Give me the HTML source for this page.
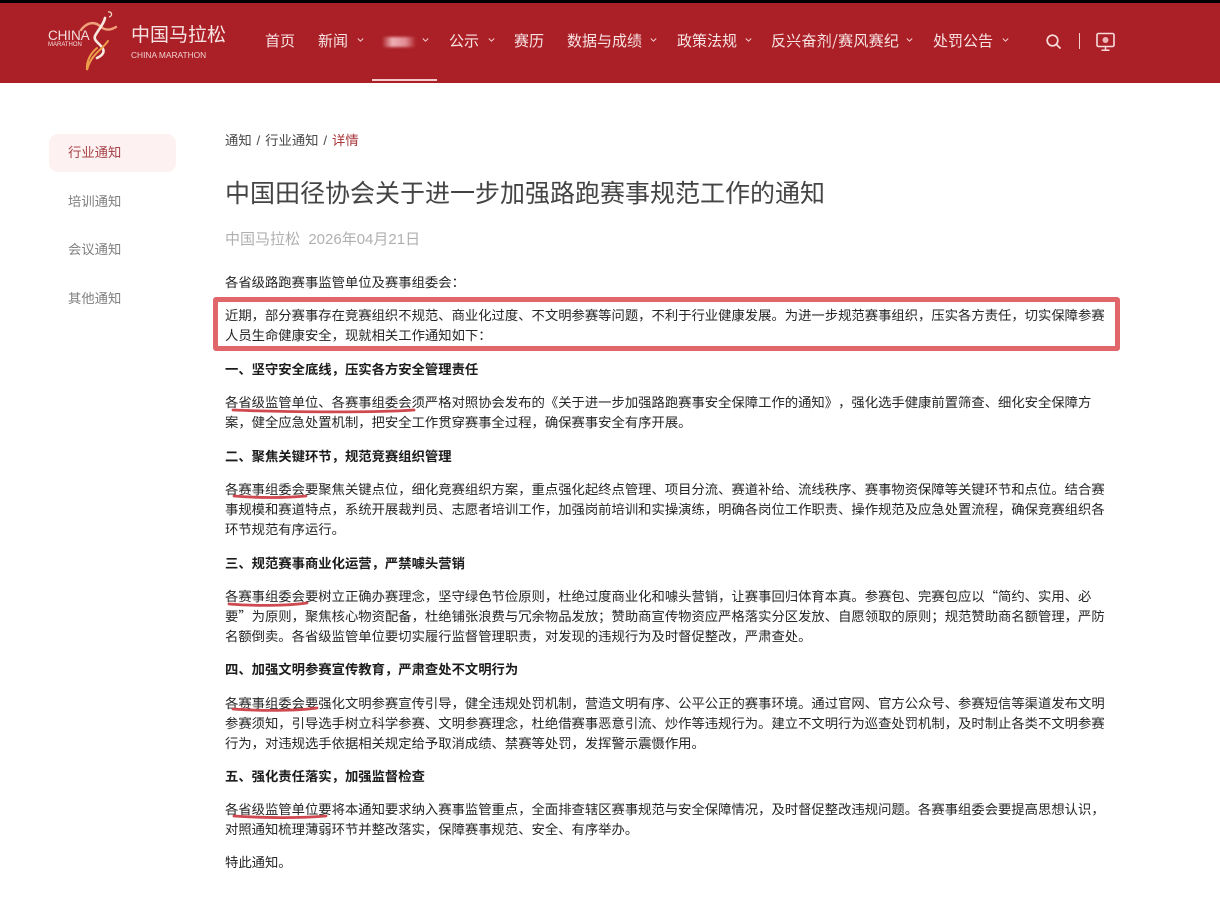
<!DOCTYPE html>
<html lang="zh-CN">
<head>
<meta charset="utf-8">
<title>中国田径协会关于进一步加强路跑赛事规范工作的通知</title>
<style>
html,body{margin:0;padding:0;width:1220px;height:900px;overflow:hidden;background:#fff;}
body{position:relative;font-family:"Liberation Sans","Noto Sans CJK SC",sans-serif;color:#333;text-spacing-trim:space-all;}
.a{position:absolute;white-space:nowrap;}
#hdr{position:absolute;left:0;top:0;width:1220px;height:83px;background:#ab2027;}
#top{position:absolute;left:0;top:0;width:1220px;height:3px;background:#000;}
.n{position:absolute;top:30px;height:21px;line-height:21px;font-size:15px;color:#f8e4e4;white-space:nowrap;filter:blur(.35px);font-family:"Noto Sans CJK SC",sans-serif;}
.c{position:absolute;top:37px;}
.l{position:absolute;left:225px;height:20px;line-height:20px;font-size:13.333px;color:#262626;white-space:nowrap;filter:blur(.3px);font-family:"Noto Sans CJK SC",sans-serif;text-spacing-trim:space-all;font-feature-settings:"palt" 0,"chws" 0;}
.b{font-weight:700;color:#1c1c1c;}
.s{position:absolute;left:68px;height:20px;line-height:20px;font-size:13.333px;color:#808080;white-space:nowrap;filter:blur(.3px);font-family:"Noto Sans CJK SC",sans-serif;}
</style>
</head>
<body>
<div id="hdr"></div>
<div id="top"></div>

<!-- logo -->
<svg class="a" style="left:78px;top:8px" width="44" height="66" viewBox="0 0 44 66" fill="none">
<path d="M30 4c4-1 5 4 1 5" stroke="#f3dcc8" stroke-width="1.300"/>
<path d="M3 22C9 14 17 13 23 19c5 4 10 3 15 0" stroke="#f0a27a" stroke-width="2.400" stroke-linecap="round"/>
<path d="M27 10c-1 6-7 12-10 18-2 5 6 8 8 13 2 4-2 7-6 9" stroke="#f7e8e0" stroke-width="2.600" stroke-linecap="round"/>
<path d="M30 33C24 42 13 46 9 62c-1-9 4-17 10-22" stroke="#eda04a" stroke-width="2" stroke-linecap="round"/>
</svg>
<div class="a" style="left:48px;top:29px;font-size:13.5px;line-height:14px;color:#f3dede;letter-spacing:-.1px">CHINA</div>
<div class="a" style="left:48px;top:42px;font-size:6px;line-height:7px;color:#f3dede">MARATHON</div>
<div class="a" style="left:131px;top:21px;font-size:19px;line-height:25px;color:#f6e3e3;font-family:'Noto Sans CJK SC',sans-serif">中国马拉松</div>
<div class="a" style="left:131px;top:50px;font-size:8.4px;line-height:10px;color:#f0d0d0">CHINA MARATHON</div>

<!-- nav -->
<div class="n" style="left:265px">首页</div>
<div class="n" style="left:318px">新闻</div>
<div class="a" style="left:382px;top:37px;width:34px;height:10px;background:linear-gradient(90deg,#ab2027,#eeb0b4 30%,#e08a90 70%,#ab2027);filter:blur(1.2px)"></div>
<div class="n" style="left:449px">公示</div>
<div class="n" style="left:514px">赛历</div>
<div class="n" style="left:567px">数据与成绩</div>
<div class="n" style="left:677px">政策法规</div>
<div class="n" style="left:771px;letter-spacing:.25px">反兴奋剂/赛风赛纪</div>
<div class="n" style="left:933px">处罚公告</div>

<svg class="c" style="left:357px" width="7" height="6" viewBox="0 0 7 6"><path d="M.8 1.500 3.500 4.200 6.200 1.500" stroke="#f3d3d3" fill="none"/></svg>
<svg class="c" style="left:422px" width="7" height="6" viewBox="0 0 7 6"><path d="M.8 1.500 3.500 4.200 6.200 1.500" stroke="#f3d3d3" fill="none"/></svg>
<svg class="c" style="left:488px" width="7" height="6" viewBox="0 0 7 6"><path d="M.8 1.500 3.500 4.200 6.200 1.500" stroke="#f3d3d3" fill="none"/></svg>
<svg class="c" style="left:650px" width="7" height="6" viewBox="0 0 7 6"><path d="M.8 1.500 3.500 4.200 6.200 1.500" stroke="#f3d3d3" fill="none"/></svg>
<svg class="c" style="left:745px" width="7" height="6" viewBox="0 0 7 6"><path d="M.8 1.500 3.500 4.200 6.200 1.500" stroke="#f3d3d3" fill="none"/></svg>
<svg class="c" style="left:906px" width="7" height="6" viewBox="0 0 7 6"><path d="M.8 1.500 3.500 4.200 6.200 1.500" stroke="#f3d3d3" fill="none"/></svg>
<svg class="c" style="left:1002px" width="7" height="6" viewBox="0 0 7 6"><path d="M.8 1.500 3.500 4.200 6.200 1.500" stroke="#f3d3d3" fill="none"/></svg>

<div class="a" style="left:372px;top:79px;width:65px;height:2px;background:#f3c9c9"></div>

<svg class="a" style="left:1045px;top:33px" width="17" height="17" viewBox="0 0 17 17" fill="none"><circle cx="7.500" cy="7.500" r="5.300" stroke="#f8dcdc" stroke-width="1.700"/><path d="M11.500 11.500 15.500 15.500" stroke="#f8dcdc" stroke-width="1.700"/></svg>
<div class="a" style="left:1079px;top:33px;width:1px;height:16px;background:#f3d0d0"></div>
<svg class="a" style="left:1095px;top:32px" width="21" height="20" viewBox="0 0 21 20" fill="none"><rect x="2" y="1.500" width="17" height="13" rx="1.500" stroke="#f8dcdc" stroke-width="1.600"/><circle cx="10.500" cy="8" r="3" fill="#eeb7b7"/><path d="M10.500 15v3M6.500 18.200h8" stroke="#f8dcdc" stroke-width="1.500"/></svg>

<!-- sidebar -->
<div class="a" style="left:49px;top:134px;width:127px;height:38px;background:#fdf1f1;border-radius:9px"></div>
<div class="s" style="top:142px;color:#a8454a">行业通知</div>
<div class="s" style="top:191px">培训通知</div>
<div class="s" style="top:239px">会议通知</div>
<div class="s" style="top:288px">其他通知</div>

<!-- head -->
<div class="a" style="left:225px;top:131px;font-size:13.333px;word-spacing:1.200px;line-height:20px;color:#4a4a4a;filter:blur(.25px)">通知 / 行业通知 / <span style="color:#a8353a">详情</span></div>
<div class="a" style="left:225px;top:175px;font-size:25px;line-height:34px;color:#444;filter:blur(.25px);font-family:'Noto Sans CJK SC',sans-serif">中国田径协会关于进一步加强路跑赛事规范工作的通知</div>
<div class="a" style="left:225px;top:230px;font-size:15px;line-height:20px;color:#b0b0b0;filter:blur(.25px)">中国马拉松&nbsp; 2026年04月21日</div>

<!-- highlight box -->
<div class="a" style="left:213px;top:297px;width:897px;height:44px;border:5px solid #e0666a;border-radius:3px;background:#fff"></div>

<!-- body -->
<div class="l" style="top:272px">各省级路跑赛事监管单位及赛事组委会&#65306;</div>
<div class="l" style="top:305px">近期&#65292;部分赛事存在竞赛组织不规范、商业化过度、不文明参赛等问题&#65292;不利于行业健康发展。为进一步规范赛事组织&#65292;压实各方责任&#65292;切实保障参赛</div>
<div class="l" style="top:325px">人员生命健康安全&#65292;现就相关工作通知如下&#65306;</div>
<div class="l b" style="top:359px">一、坚守安全底线&#65292;压实各方安全管理责任</div>
<div class="l" style="top:392px">各省级监管单位、各赛事组委会须严格对照协会发布的《关于进一步加强路跑赛事安全保障工作的通知》&#65292;强化选手健康前置筛查、细化安全保障方</div>
<div class="l" style="top:412px">案&#65292;健全应急处置机制&#65292;把安全工作贯穿赛事全过程&#65292;确保赛事安全有序开展。</div>
<div class="l b" style="top:446px">二、聚焦关键环节&#65292;规范竞赛组织管理</div>
<div class="l" style="top:479px">各赛事组委会要聚焦关键点位&#65292;细化竞赛组织方案&#65292;重点强化起终点管理、项目分流、赛道补给、流线秩序、赛事物资保障等关键环节和点位。结合赛</div>
<div class="l" style="top:499px">事规模和赛道特点&#65292;系统开展裁判员、志愿者培训工作&#65292;加强岗前培训和实操演练&#65292;明确各岗位工作职责、操作规范及应急处置流程&#65292;确保竞赛组织各</div>
<div class="l" style="top:519px">环节规范有序运行。</div>
<div class="l b" style="top:553px">三、规范赛事商业化运营&#65292;严禁噱头营销</div>
<div class="l" style="top:586px">各赛事组委会要树立正确办赛理念&#65292;坚守绿色节俭原则&#65292;杜绝过度商业化和噱头营销&#65292;让赛事回归体育本真。参赛包、完赛包应以&#8220;简约、实用、必</div>
<div class="l" style="top:606px">要&#8221;为原则&#65292;聚焦核心物资配备&#65292;杜绝铺张浪费与冗余物品发放&#65307;赞助商宣传物资应严格落实分区发放、自愿领取的原则&#65307;规范赞助商名额管理&#65292;严防</div>
<div class="l" style="top:626px">名额倒卖。各省级监管单位要切实履行监督管理职责&#65292;对发现的违规行为及时督促整改&#65292;严肃查处。</div>
<div class="l b" style="top:659px">四、加强文明参赛宣传教育&#65292;严肃查处不文明行为</div>
<div class="l" style="top:693px">各赛事组委会要强化文明参赛宣传引导&#65292;健全违规处罚机制&#65292;营造文明有序、公平公正的赛事环境。通过官网、官方公众号、参赛短信等渠道发布文明</div>
<div class="l" style="top:713px">参赛须知&#65292;引导选手树立科学参赛、文明参赛理念&#65292;杜绝借赛事恶意引流、炒作等违规行为。建立不文明行为巡查处罚机制&#65292;及时制止各类不文明参赛</div>
<div class="l" style="top:733px">行为&#65292;对违规选手依据相关规定给予取消成绩、禁赛等处罚&#65292;发挥警示震慑作用。</div>
<div class="l b" style="top:766px">五、强化责任落实&#65292;加强监督检查</div>
<div class="l" style="top:799px">各省级监管单位要将本通知要求纳入赛事监管重点&#65292;全面排查辖区赛事规范与安全保障情况&#65292;及时督促整改违规问题。各赛事组委会要提高思想认识&#65292;</div>
<div class="l" style="top:819px">对照通知梳理薄弱环节并整改落实&#65292;保障赛事规范、安全、有序举办。</div>
<div class="l" style="top:852px">特此通知。</div>

<!-- hand-drawn underlines -->
<svg class="a" style="left:0;top:0" width="1220" height="900" fill="none" stroke="#cf4a50" stroke-width="2.800" stroke-linecap="round">
<path d="M233 410C280 412 370 413 414 410"/>
<path d="M234 496C260 498 285 498 306 496"/>
<path d="M229 604C255 606 285 606 307 603"/>
<path d="M233 709C260 711 295 711 317 708"/>
<path d="M234 816C265 818 300 818 326 816"/>
</svg>
</body>
</html>
